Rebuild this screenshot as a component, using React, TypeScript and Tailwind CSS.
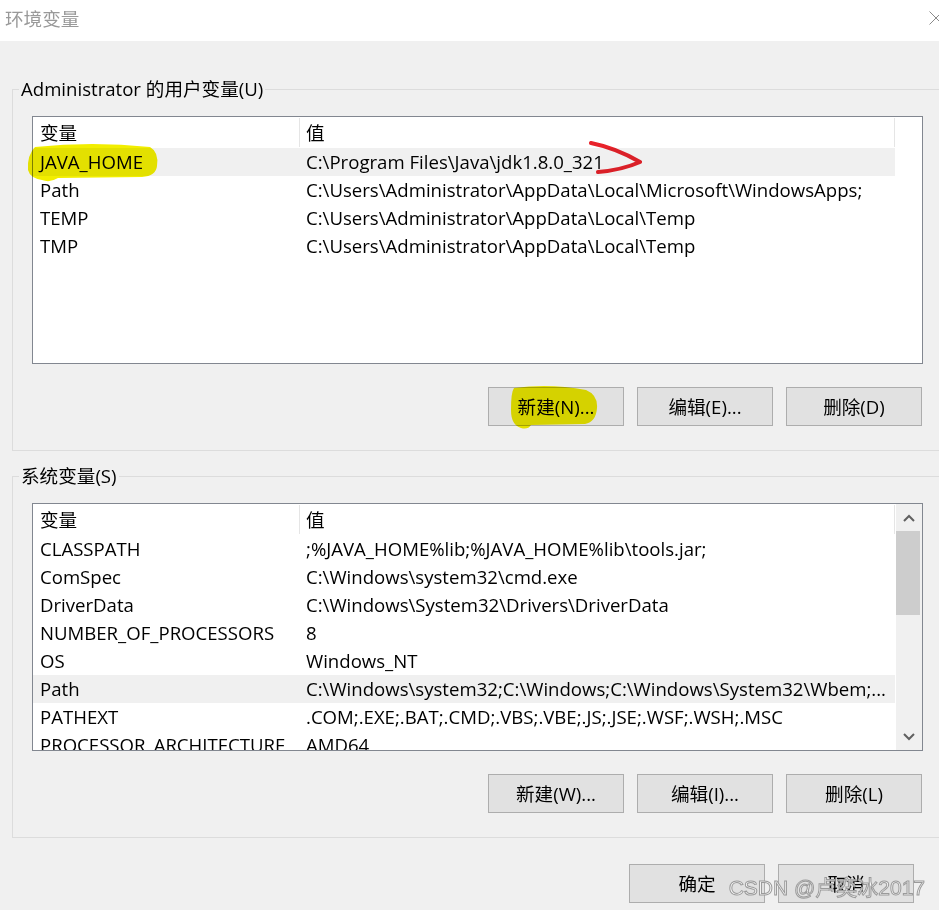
import React from 'react';

type Row = { name: string; value: string };

const userVars: Row[] = [
  { name: 'JAVA_HOME', value: 'C:\\Program Files\\Java\\jdk1.8.0_321' },
  { name: 'Path', value: 'C:\\Users\\Administrator\\AppData\\Local\\Microsoft\\WindowsApps;' },
  { name: 'TEMP', value: 'C:\\Users\\Administrator\\AppData\\Local\\Temp' },
  { name: 'TMP', value: 'C:\\Users\\Administrator\\AppData\\Local\\Temp' },
];

const systemVars: Row[] = [
  { name: 'CLASSPATH', value: ';%JAVA_HOME%lib;%JAVA_HOME%lib\\tools.jar;' },
  { name: 'ComSpec', value: 'C:\\Windows\\system32\\cmd.exe' },
  { name: 'DriverData', value: 'C:\\Windows\\System32\\Drivers\\DriverData' },
  { name: 'NUMBER_OF_PROCESSORS', value: '8' },
  { name: 'OS', value: 'Windows_NT' },
  { name: 'Path', value: 'C:\\Windows\\system32;C:\\Windows;C:\\Windows\\System32\\Wbem;...' },
  { name: 'PATHEXT', value: '.COM;.EXE;.BAT;.CMD;.VBS;.VBE;.JS;.JSE;.WSF;.WSH;.MSC' },
  { name: 'PROCESSOR_ARCHITECTURE', value: 'AMD64' },
];

const Chevron = ({ up }: { up?: boolean }) => (
  <svg width="12" height="8" viewBox="0 0 12 8">
    <path
      d={up ? 'M1 7 L6 2 L11 7' : 'M1 1 L6 6 L11 1'}
      fill="none"
      stroke="#606060"
      strokeWidth="2"
    />
  </svg>
);

const Scrollbar = () => (
  <div className="w-[26px] shrink-0 bg-[#f0f0f0] flex flex-col">
    <div className="h-[27px] flex items-center justify-center">
      <Chevron up />
    </div>
    <div className="h-[84px] w-[24px] bg-[#cdcdcd]" />
    <div className="flex-1" />
    <div className="h-[27px] flex items-center justify-center">
      <Chevron />
    </div>
  </div>
);

const ListBox = ({ rows, selected, scroll }: { rows: Row[]; selected: number; scroll?: boolean }) => (
  <div className="ml-[19px] mt-[15px] h-[248px] w-[891px] border border-[#828790] bg-white flex overflow-hidden">
    <div className="w-[863px] shrink-0 flex flex-col">
      <div className="flex h-[31px] shrink-0">
        <div className="w-[267px] pl-[7px] flex items-center border-r border-[#e5e5e5] my-[1px]">变量</div>
        <div className="w-[595px] pl-[6px] flex items-center border-r border-[#e5e5e5] my-[1px]">值</div>
      </div>
      {rows.map((row, i) => (
        <div
          key={row.name + i}
          className={`flex h-[28px] shrink-0 w-[862px] items-center whitespace-nowrap ${i === selected ? 'bg-[#f0f0f0]' : ''}`}
        >
          <div className="w-[267px] pl-[7px] overflow-hidden">{row.name}</div>
          <div className="flex-1 pl-[6px] overflow-hidden">{row.value}</div>
        </div>
      ))}
    </div>
    {scroll && <Scrollbar />}
  </div>
);

const Button = ({ label }: { label: string }) => (
  <button className="w-[136px] h-[39px] bg-[#e1e1e1] border border-[#adadad] flex items-center justify-center text-black">
    {label}
  </button>
);

const Group = ({
  title,
  rows,
  selected,
  scroll,
  buttons,
  top,
}: {
  title: string;
  rows: Row[];
  selected: number;
  scroll?: boolean;
  buttons: string[];
  top: string;
}) => (
  <fieldset className={`${top} ml-[12px] w-[940px] border border-[#dcdcdc] pb-[24px]`}>
    <legend className="ml-[6px] px-[2px] leading-[24px]">{title}</legend>
    <ListBox rows={rows} selected={selected} scroll={scroll} />
    <div className="ml-[19px] mt-[23px] w-[890px] flex justify-end gap-[13px]">
      {buttons.map((b) => (
        <Button key={b} label={b} />
      ))}
    </div>
  </fieldset>
);

const App = () => {
  return (
    <div className="relative w-[939px] h-[910px] overflow-hidden bg-[#f0f0f0] text-[18.6px] text-black font-['Open_Sans','Noto_Sans_CJK_SC',sans-serif]">
      <div className="h-[41px] bg-white flex items-center justify-between pl-[5px]">
        <span className="text-[#999999] -mt-[4px]">环境变量</span>
        <svg width="14" height="14" viewBox="0 0 14 14" className="-mr-[4px] -mt-[6px]">
          <path d="M0.5 0.5 L13.5 13.5 M13.5 0.5 L0.5 13.5" stroke="#8a8a8a" strokeWidth="1" fill="none" />
        </svg>
      </div>

      <Group
        top="mt-[36px]"
        title="Administrator 的用户变量(U)"
        rows={userVars}
        selected={0}
        buttons={['新建(N)...', '编辑(E)...', '删除(D)']}
      />
      <Group
        top="mt-[13px]"
        title="系统变量(S)"
        rows={systemVars}
        selected={5}
        scroll
        buttons={['新建(W)...', '编辑(I)...', '删除(L)']}
      />

      <div className="mt-[26px] pr-[25px] flex justify-end gap-[13px]">
        <Button label="确定" />
        <Button label="取消" />
      </div>

      <svg
        className="absolute inset-0 pointer-events-none mix-blend-multiply"
        width="939"
        height="910"
        viewBox="0 0 939 910"
      >
        <path
          d="M35 147 Q 92 141 150 147 Q 159 152 157 166 Q 156 176 142 177 L 58 178 Q 50 183 42 180 Q 30 178 28 170 Q 27 155 35 147 Z"
          fill="#f2ee00"
        />
        <path
          d="M514 388 Q 550 383 586 390 Q 598 395 597 408 Q 596 422 585 424 L 531 425 Q 528 430 521 428 Q 511 425 511 410 Q 511 392 514 388 Z"
          fill="#f2ee00"
        />
        <path
          d="M591 143 Q 616 148 640 162 Q 622 170 598 172"
          fill="none"
          stroke="#e8222a"
          strokeWidth="4"
          strokeLinecap="round"
          strokeLinejoin="round"
        />
      </svg>

      <div className="absolute right-[14px] bottom-[12px] text-[21px] leading-none text-white/80 font-['Liberation_Sans','Noto_Sans_CJK_SC',sans-serif] [-webkit-text-stroke:1px_#9a9a9a]">
        CSDN @卢奕冰2017
      </div>
    </div>
  );
};

export default App;
